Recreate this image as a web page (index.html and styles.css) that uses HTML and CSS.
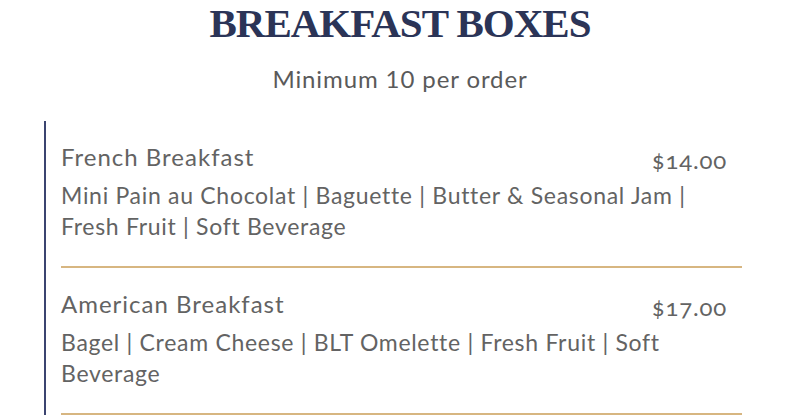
FILE: index.html
```html
<!DOCTYPE html>
<html>
<head>
<meta charset="utf-8">
<link rel="stylesheet" href="styles.css">
</head>
<body>
<div class="page">
  <h1 class="title">BREAKFAST BOXES</h1>
  <p class="sub">Minimum 10 per order</p>
  <div class="menu">
    <div class="item">
      <div class="item-head">
        <span class="name">French Breakfast</span>
        <span class="price">$14.00</span>
      </div>
      <p class="desc">Mini Pain au Chocolat | Baguette | Butter &amp; Seasonal Jam | Fresh Fruit | Soft Beverage</p>
    </div>
    <div class="item">
      <div class="item-head">
        <span class="name">American Breakfast</span>
        <span class="price">$17.00</span>
      </div>
      <p class="desc">Bagel | Cream Cheese | BLT Omelette | Fresh Fruit | Soft Beverage</p>
    </div>
  </div>
</div>
</body>
</html>
```
FILE: styles.css
```css
html, body {
  margin: 0;
  padding: 0;
  background: #ffffff;
}
.page {
  width: 800px;
  height: 420px;
  overflow: hidden;
  font-family: Lato, "Open Sans", sans-serif;
  color: #636363;
}
.title {
  margin: 0;
  text-align: center;
  font-family: "Liberation Serif", "DejaVu Serif", serif;
  font-weight: bold;
  font-size: 41px;
  line-height: 46px;
  letter-spacing: -1px;
  color: #2b3457;
}
.sub {
  margin: 18px 0 0;
  text-align: center;
  font-size: 24px;
  line-height: 30px;
  letter-spacing: 0.9px;
  color: #5a5a5a;
}
.menu {
  margin: 27px 0 0 44px;
  width: 681px;
  border-left: 2px solid #3b4470;
  padding-left: 15px;
}
.item {
  border-bottom: 2px solid #d7b681;
  padding: 21px 0 24px;
}
.item-head {
  display: flex;
  justify-content: space-between;
  align-items: flex-start;
}
.name {
  font-size: 24px;
  line-height: 30px;
  letter-spacing: 1px;
}
.price {
  font-size: 24px;
  line-height: 30px;
  margin-top: 3px;
  padding-right: 15px;
  letter-spacing: 0.8px;
  font-variant-numeric: oldstyle-nums;
}
.desc {
  margin: 5px 0 0;
  font-size: 23px;
  line-height: 31px;
  letter-spacing: 0.7px;
  padding-right: 30px;
}
```
